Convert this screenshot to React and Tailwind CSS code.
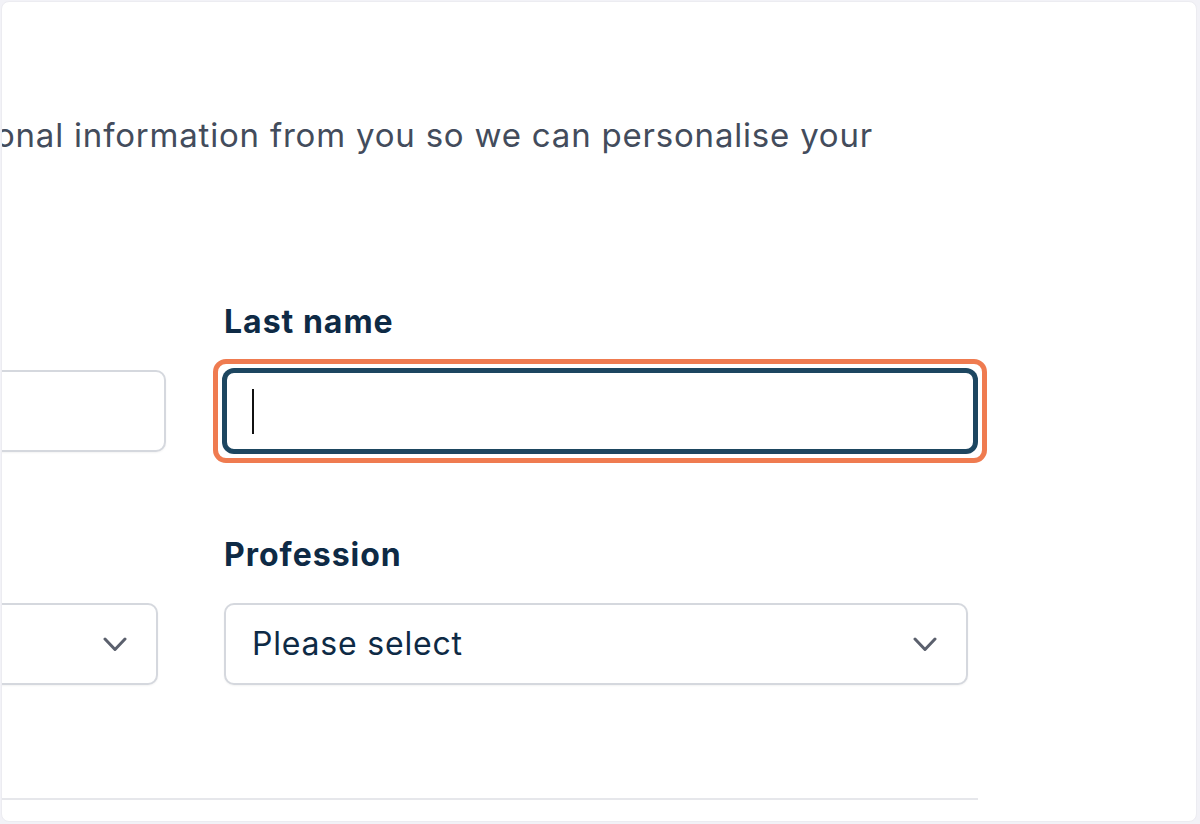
const ink = 'text-[#0e2a45]'

function Chevron() {
  return (
    <svg width="24" height="15" viewBox="0 0 24 15" fill="none" className="shrink-0">
      <path d="M2 2l10 10.5L22 2" stroke="#5b606d" strokeWidth="3" strokeLinecap="round" strokeLinejoin="round" />
    </svg>
  )
}

function FieldLabel({ children }) {
  return (
    <div className={`h-10 mb-[28px] text-[32px] leading-10 font-bold tracking-[1px] whitespace-nowrap ${ink}`}>
      {children}
    </div>
  )
}

function TextField({ label, focused }) {
  return (
    <div className="flex flex-col">
      <FieldLabel>{label}</FieldLabel>
      <div className="relative w-[752px] h-[82px]">
        {focused && (
          <div className="absolute -inset-[11px] rounded-[13px] border-[5px] border-[#ef7b50]" />
        )}
        <div
          className={
            focused
              ? 'relative h-full rounded-[10px] border-[3px] border-[#1d4660] shadow-[0_0_0_2px_#1d4660] bg-white flex items-center pl-[25px]'
              : 'h-full rounded-[10px] border-2 border-[#d5d8de] bg-white shadow-[0_1px_2px_rgba(0,0,0,0.05)]'
          }
        >
          {focused && <div className="w-[2px] h-[45px] bg-[#111]" />}
        </div>
      </div>
    </div>
  )
}

function SelectField({ label, value }) {
  return (
    <div className="flex flex-col">
      <FieldLabel>{label}</FieldLabel>
      <div className="w-[744px] h-[82px] rounded-[10px] border-2 border-[#d5d8de] bg-white shadow-[0_1px_2px_rgba(0,0,0,0.05)] flex items-center justify-between pl-[26px] pr-[29px]">
        <span className={`text-[32px] leading-10 tracking-[0.8px] ${ink}`}>{value}</span>
        <Chevron />
      </div>
    </div>
  )
}

export default function App() {
  return (
    <div className="w-[1200px] h-[824px] bg-[#f2f2f7] pt-px pl-px pr-[3px] pb-[2px]" style={{ fontFamily: 'Inter, "Noto Sans", sans-serif' }}>
      <div className="h-full rounded-lg border border-[#ececf1] bg-white overflow-hidden">
        <div className="w-[1564px] -ml-[588px]">
          <div className="flex justify-end pr-[105px] mt-[113px]">
            <p className="whitespace-nowrap text-[33px] leading-10 tracking-[0.8px] text-[#434c5c]">
              We need some additional personal information from you so we can personalise your
            </p>
          </div>

          <div className="grid grid-cols-[752px_752px] gap-x-[58px] gap-y-[83px] mt-[147px]">
            <TextField label="First name" />
            <TextField label="Last name" focused />
            <SelectField label="Title" value="Please select" />
            <SelectField label="Profession" value="Please select" />
          </div>

          <div className="mt-[113px] h-[2px] bg-[#e6e7eb]" />
        </div>
      </div>
    </div>
  )
}
